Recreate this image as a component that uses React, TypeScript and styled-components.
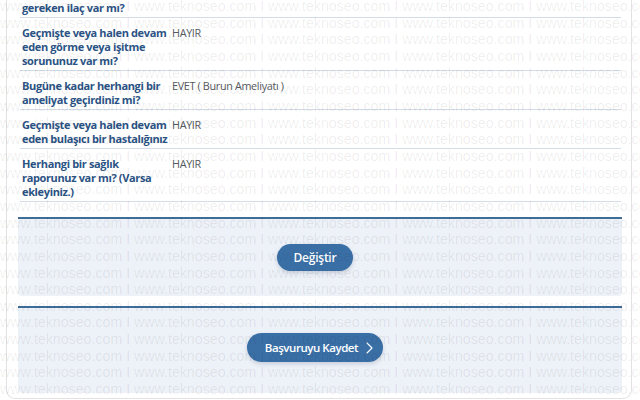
import React from "react";
import styled, { createGlobalStyle } from "styled-components";

const Global = createGlobalStyle`
  html, body { margin: 0; padding: 0; background: #ffffff; }
  body { width: 640px; height: 400px; overflow: hidden; font-family: "Open Sans", "Liberation Sans", sans-serif; }
`;

const Page = styled.div`
  position: relative;
  width: 640px;
  height: 400px;
  overflow: hidden;
  background: #ffffff;
`;

const Card = styled.div`
  box-sizing: border-box;
  width: 626px;
  margin-left: 6px;
  padding: 0 9px 5px 11px;
  border: 1px solid #e2e2e2;
  border-top: none;
  border-radius: 0 0 9px 9px;
  background: #ffffff;
`;

const Rows = styled.div`
  margin: 0 1px 0 2px;
`;

const Row = styled.div<{ $top?: number }>`
  display: grid;
  grid-template-columns: 148px 1fr;
  column-gap: 2px;
  padding: ${(p) => p.$top ?? 8}px 0 2px 2px;
  border-bottom: 1px solid #d3dce7;
`;

const Label = styled.div`
  font-size: 11px;
  line-height: 14px;
  font-weight: 700;
  letter-spacing: -0.36px;
  color: #2b5384;
  white-space: nowrap;
`;

const Value = styled.div`
  font-size: 10.8px;
  line-height: 14px;
  letter-spacing: -0.33px;
  color: #555a60;
  white-space: nowrap;
`;

const ActionPanel = styled.div<{ $gap: number; $bottom: number }>`
  margin-top: ${(p) => p.$gap}px;
  border-top: 2px solid #3e6d98;
  background: #edf1f8;
  border-radius: 0 0 4px 4px;
  padding: 25px 10px ${(p) => p.$bottom}px 0;
  display: flex;
  justify-content: center;
`;

const PillButton = styled.button<{ $h: number; $left: number; $right: number; $size: number; $track: number }>`
  display: inline-flex;
  align-items: center;
  gap: 8px;
  height: ${(p) => p.$h}px;
  padding: 0 ${(p) => p.$right}px 0 ${(p) => p.$left}px;
  border: none;
  border-radius: 999px;
  background: #3a6fa6;
  color: #ffffff;
  font-family: "Open Sans", "Liberation Sans", sans-serif;
  font-size: ${(p) => p.$size}px;
  letter-spacing: ${(p) => p.$track}px;
  font-weight: 600;
  box-shadow: 0 2px 4px rgba(20, 50, 90, 0.18);
  cursor: pointer;
`;

const Chevron = () => (
  <svg width="7" height="12" viewBox="0 0 7 12" aria-hidden="true">
    <polyline points="1,1 6,6 1,11" fill="none" stroke="#ffffff" strokeWidth="1.1" strokeLinecap="round" strokeLinejoin="round" />
  </svg>
);

const Watermark = styled.div`
  position: absolute;
  inset: 0;
  pointer-events: none;
  overflow: hidden;
  margin-top: -2px;
  font-family: "Liberation Sans", Arial, sans-serif;
  font-size: 14.2px;
  line-height: 16.67px;
  color: rgba(0, 0, 0, 0.075);
  white-space: nowrap;
`;

const WatermarkLine = styled.div`
  height: 16.67px;
`;

const rows: { label: string[]; value: string; top?: number }[] = [
  { label: ["gereken ilaç var mı?"], value: "", top: 1 },
  { label: ["Geçmişte veya halen devam", "eden görme veya işitme", "sorununuz var mı?"], value: "HAYIR" },
  { label: ["Bugüne kadar herhangi bir", "ameliyat geçirdiniz mi?"], value: "EVET ( Burun Ameliyatı )" },
  { label: ["Geçmişte veya halen devam", "eden bulaşıcı bir hastalığınız"], value: "HAYIR" },
  { label: ["Herhangi bir sağlık", "raporunuz var mı? (Varsa", "ekleyiniz.)"], value: "HAYIR" },
];

const wmText = Array.from({ length: 6 }, () => "www.teknoseo.com").join(" I ");

export default function App() {
  return (
    <Page>
      <Global />
      <Card>
        <Rows>
          {rows.map((r, i) => (
            <Row key={i} $top={r.top}>
              <Label>
                {r.label.map((l, j) => (
                  <div key={j}>{l}</div>
                ))}
              </Label>
              <Value>{r.value}</Value>
            </Row>
          ))}
        </Rows>
        <ActionPanel $gap={15} $bottom={25}>
          <PillButton $h={27} $left={17} $right={17} $size={12} $track={-0.25}>
            Değiştir
          </PillButton>
        </ActionPanel>
        <ActionPanel $gap={10} $bottom={31}>
          <PillButton $h={29} $left={18} $right={10} $size={11.5} $track={-0.45}>
            Başvuruyu Kaydet
            <Chevron />
          </PillButton>
        </ActionPanel>
      </Card>
      <Watermark>
        {Array.from({ length: 25 }, (_, i) => (
          <WatermarkLine key={i}>{wmText}</WatermarkLine>
        ))}
      </Watermark>
    </Page>
  );
}
